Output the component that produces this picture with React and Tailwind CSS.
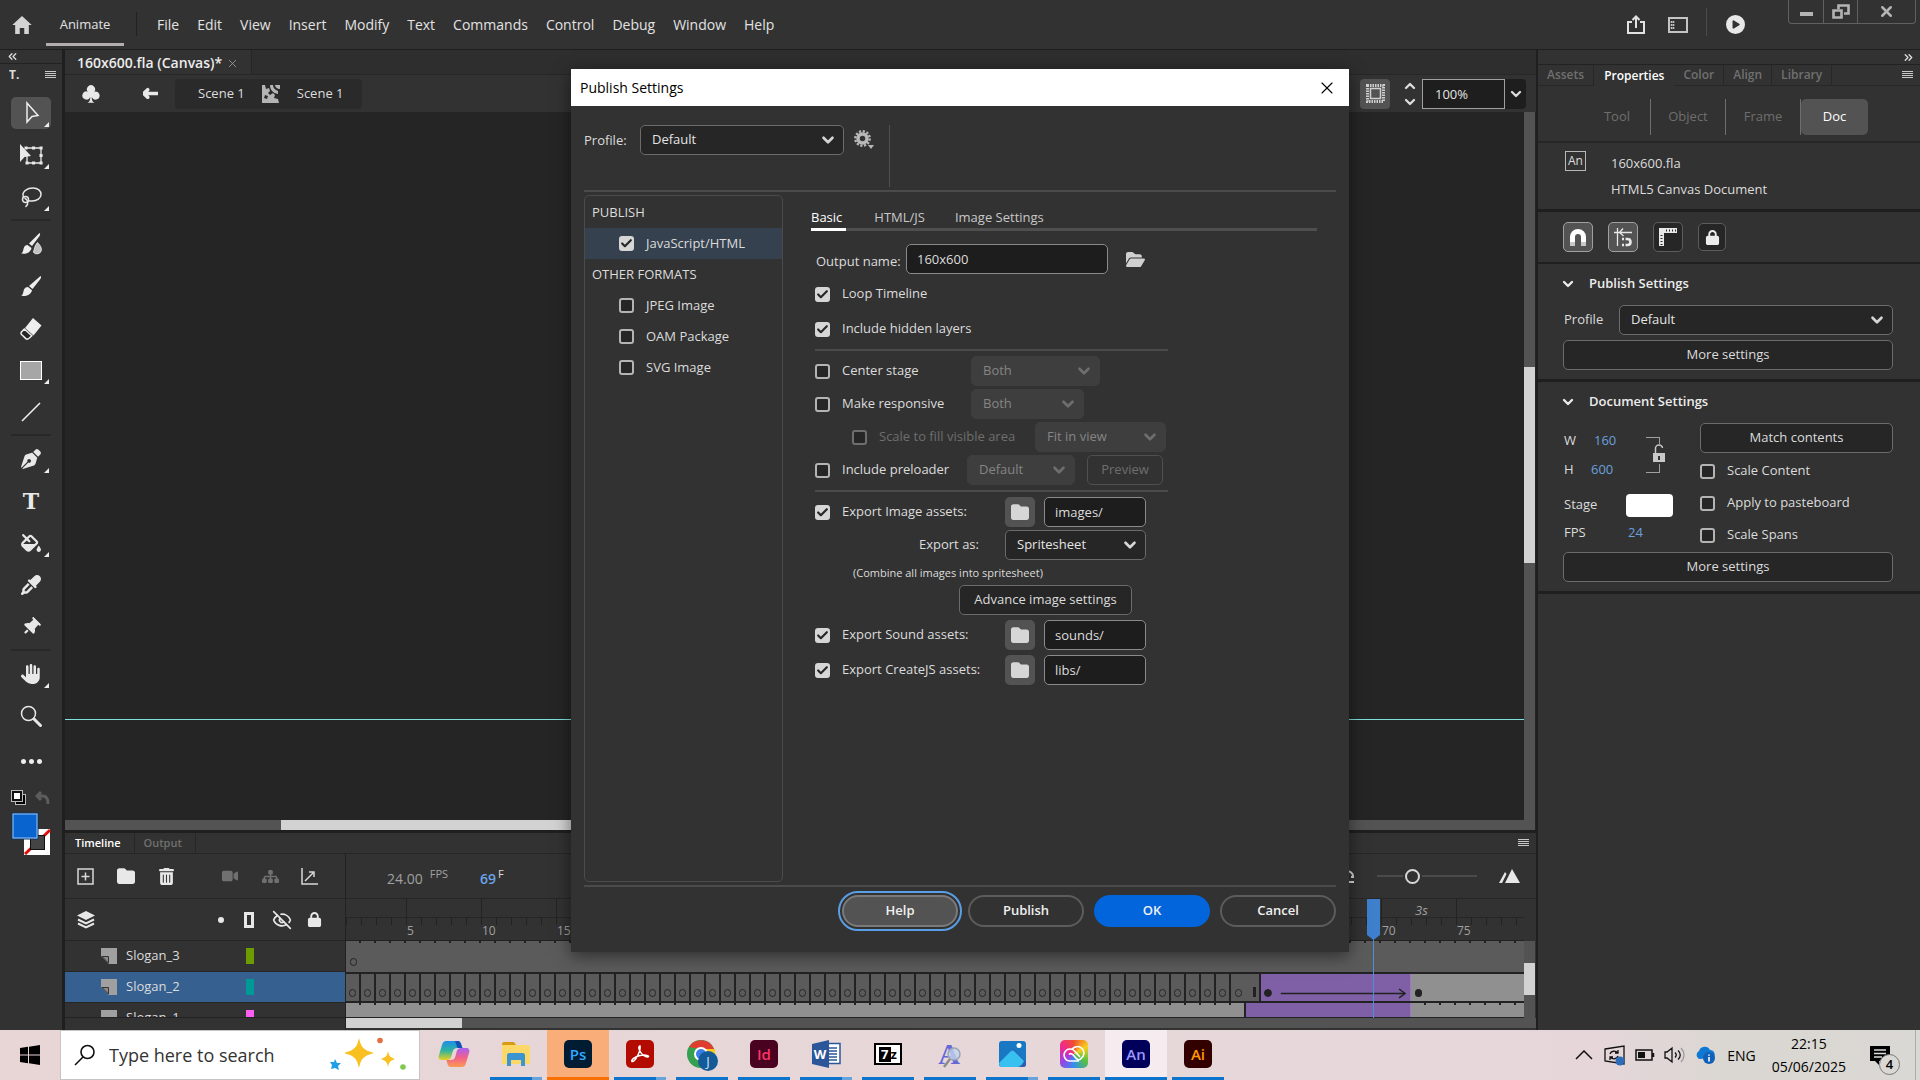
import { ChevronDown, ChevronUp, X, Share, EyeOff, Check, ChevronsLeft, ChevronsRight } from "lucide-react";
import {
  FaHand,
  FaThumbtack,
  FaPenNib,
  FaEyeDropper,
  FaFillDrip,
  FaLock,
  FaLockOpen,
  FaTrashCan,
  FaFolder,
  FaFolderOpen,
  FaVideo,
  FaSitemap,
  FaArrowLeftLong,
  FaCirclePlay,
} from "react-icons/fa6";
import { IoMdHome } from "react-icons/io";
import { GiClubs } from "react-icons/gi";

const MENUS = ["File", "Edit", "View", "Insert", "Modify", "Text", "Commands", "Control", "Debug", "Window", "Help"];

/* ---------- shared controls ---------- */

function Tick({ label, checked = false, disabled = false }) {
  return (
    <label className={`flex items-center gap-3 whitespace-nowrap ${disabled ? "text-[#6e6e6e]" : ""}`}>
      <span className="relative flex size-[15px] shrink-0">
        <input
          type="checkbox"
          defaultChecked={checked}
          disabled={disabled}
          className="peer size-[15px] appearance-none rounded-[3px] border-2 border-[#b4b4b4] bg-[#262626] checked:border-[#d6d6d6] checked:bg-[#d6d6d6] disabled:border-[#6e6e6e]"
        />
        <Check
          size={13}
          strokeWidth={4}
          className="pointer-events-none absolute left-px top-px hidden text-[#262626] peer-checked:block"
        />
      </span>
      {label}
    </label>
  );
}

function Select({ label, value, className = "", disabled = false }) {
  return (
    <span className={`relative flex h-[30px] ${className}`}>
      <select
        aria-label={label}
        disabled={disabled}
        className="w-full appearance-none rounded-[5px] border border-[#6b6b6b] bg-[#262626] pl-[11px] text-[13px] text-[#e4e4e4] disabled:border-[#3e3e3e] disabled:bg-[#3e3e3e] disabled:text-[#858585] disabled:opacity-100"
      >
        <option>{value}</option>
      </select>
      <ChevronDown
        size={18}
        strokeWidth={3.5}
        className={`pointer-events-none absolute right-[7px] top-[6px] ${disabled ? "text-[#6e6e6e]" : "text-[#d6d6d6]"}`}
      />
    </span>
  );
}

function BoxButton({ children, className = "" }) {
  return (
    <button className={`h-[30px] rounded-[5px] border border-[#6b6b6b] bg-[#262626] text-[13px] ${className}`}>
      {children}
    </button>
  );
}

function Lines() {
  return (
    <svg width="11" height="8" viewBox="0 0 11 8" fill="#c8c8c8">
      <path d="M0 0h11v1H0zM0 2h11v1H0zM0 4h11v1H0zM0 6h11v1H0z" />
    </svg>
  );
}

/* ---------- top bar ---------- */

function TopBar() {
  return (
    <header className="flex h-[49px] shrink-0 text-[14px] text-[#e2e2e2]">
      <button aria-label="Home" className="ml-[10px] flex w-[24px] items-center text-[#d4d4d4]">
        <IoMdHome size={24} />
      </button>
      <button className="relative ml-3 flex w-[78px] items-center justify-center text-[13px]">
        Animate
        <span className="absolute inset-x-0 bottom-[3px] h-[3px] bg-[#b5aeb0]" />
      </button>
      <span className="ml-3 mt-3 h-6 w-px bg-[#222]" />
      <nav className="ml-5 flex items-center gap-[18px]">
        {MENUS.map((m) => (
          <button key={m}>{m}</button>
        ))}
      </nav>
      <div className="ml-auto flex items-center">
        <button aria-label="Share" className="flex w-[42px] justify-center">
          <svg width="20" height="20" viewBox="0 0 20 20" fill="none" stroke="#e2e2e2" strokeWidth="2">
            <path d="M6 7H2v11h16V7h-4M10 13V2M6.500 5L10 1.500 13.500 5" />
          </svg>
        </button>
        <button aria-label="Workspaces" className="flex w-[42px] justify-center">
          <svg width="20" height="16" viewBox="0 0 20 16" fill="none" stroke="#c4c4c4">
            <rect x="1" y="1" width="18" height="14" strokeWidth="2" />
            <path d="M3.500 4v9M5.500 4v9" strokeWidth="1.600" strokeDasharray="2 1" />
          </svg>
        </button>
        <span className="ml-[7px] mt-2 h-7 w-px self-start bg-[#4b4b4b]" />
        <button aria-label="Test movie" className="ml-[19px] text-[#e8e8e8]">
          <FaCirclePlay size={19} />
        </button>
      </div>
      <div className="ml-[43px] mr-1 flex h-6 rounded-b-[4px] border border-t-0 border-[#606060] text-[#b4b4b4]">
        <button aria-label="Minimize" className="flex w-[35px] items-center justify-center border-r border-[#606060]">
          <span className="mt-1 h-1 w-[13px] bg-[#b4b4b4]" />
        </button>
        <button aria-label="Restore" className="flex w-[34px] items-center justify-center border-r border-[#606060]">
          <svg width="18" height="15" viewBox="0 0 18 15" fill="none" stroke="#b4b4b4" strokeWidth="2.600">
            <path d="M1.500 6.500h8v7h-8zM6.500 5V1.500h10v8H12" />
          </svg>
        </button>
        <button aria-label="Close" className="flex w-[57px] items-center justify-center">
          <X size={17} strokeWidth={3.5} />
        </button>
      </div>
    </header>
  );
}

/* ---------- tools ---------- */

const Cursor = (
  <svg width="24" height="24" viewBox="0 0 24 24" fill="none" stroke="#eee" strokeWidth="1.500">
    <path d="M8 2v19l5-5.500 6-1z" />
  </svg>
);
const FreeTransform = (
  <svg width="26" height="24" viewBox="0 0 26 24" fill="none" stroke="#e8e8e8">
    <path d="M8 5h15v15H9V12" strokeWidth="1.300" />
    <path d="M2 1v18l4.500-5 6.500-1z" fill="#e8e8e8" stroke="none" />
    <path d="M8 5h.1M15.500 5h.1M23 5h.1M23 12.500h.1M23 20h.1M15.500 20h.1M9 20h.1" strokeWidth="3" strokeLinecap="square" />
  </svg>
);
const Lasso = (
  <svg width="24" height="24" viewBox="0 0 24 24" fill="none" stroke="#e8e8e8" strokeWidth="1.500">
    <path d="M4.500 12.500C2 6 9 3 14 3c5 0 8 3 8 6.500S18 16 13 16c-1.500 0-2.500 0-3.500-.3" />
    <circle cx="6.500" cy="14.500" r="3" />
    <path d="M5.500 13c4 2 4.500 6 1 9" />
  </svg>
);
const Brush = (
  <svg width="24" height="24" viewBox="0 0 24 24" fill="#eee">
    <path d="M21.500 2c1 .6.5 2-.5 3.500L13.500 15 10 12z" />
    <path d="M9 13l4 3.200c-1 4.800-6 6.300-11 5.600 2-1 2-2.600 2.600-5C5.300 14 7 13 9 13z" />
  </svg>
);
const FluidBrush = (
  <svg width="24" height="24" viewBox="0 0 24 24" fill="#eee">
    <path d="M20.500 1c1.200.6.5 2-.3 3.500L13 14l-3-2.600z" />
    <path d="M8.500 13l4 3c-1 4.800-5.500 6.300-10.500 5.600 2-1 2-2.600 2.600-5C5.300 14 6.500 13 8.500 13z" />
    <path d="M18.500 10.500c2.500 2.500 4 5 4 7.300a4.600 4.600 0 0 1-8.300 2.200c1.600-2.500.8-5.500 4.300-9.500z" fill="#c0c0c0" stroke="#eee" strokeWidth=".8" />
  </svg>
);
const Eraser = (
  <svg width="24" height="24" viewBox="0 0 24 24" fill="#eee">
    <path d="M14 2l8.500 7.500-8 10L6 12z" />
    <path d="M5.300 13l7.500 6.800-3 2.700c-1 .8-2.300.7-3.200-.1l-4-3.800c-.8-.9-.8-1.600-.1-2.600z" fill="#262626" stroke="#eee" strokeWidth="1.500" />
  </svg>
);
const Line = (
  <svg width="20" height="20" viewBox="0 0 20 20" stroke="#eee" strokeWidth="1.600">
    <path d="M1 19L19 1" />
  </svg>
);
const Magnifier = (
  <svg width="24" height="24" viewBox="0 0 24 24" fill="none" stroke="#e8e8e8">
    <circle cx="9.500" cy="9.500" r="7" strokeWidth="1.500" />
    <path d="M15 15l6.500 6.500" strokeWidth="3" strokeLinecap="round" />
  </svg>
);

const TOOLS = [
  { name: "Selection", icon: Cursor, more: true, active: true },
  { name: "Free Transform", icon: FreeTransform, more: true },
  { name: "Lasso", icon: Lasso, more: true },
  null,
  { name: "Fluid Brush", icon: FluidBrush },
  { name: "Classic Brush", icon: Brush },
  { name: "Eraser", icon: Eraser },
  { name: "Rectangle", icon: <span className="h-[19px] w-[22px] border border-white bg-[#a6a6a6]" />, more: true },
  { name: "Line", icon: Line },
  null,
  { name: "Pen", icon: <FaPenNib size={20} />, more: true },
  { name: "Text", icon: <span className="font-['DejaVu_Serif',serif] text-[22px] font-bold leading-none">T</span> },
  { name: "Paint Bucket", icon: <FaFillDrip size={20} />, more: true },
  { name: "Eyedropper", icon: <FaEyeDropper size={20} /> },
  { name: "Asset Warp", icon: <FaThumbtack size={18} className="rotate-45" /> },
  null,
  { name: "Hand", icon: <FaHand size={20} />, more: true },
  { name: "Zoom", icon: Magnifier },
];

function Toolbar() {
  return (
    <aside className="flex w-[65px] shrink-0 flex-col border-r-[3px] border-t border-[#1f1f1f]">
      <div className="flex h-[14px] items-center border-b border-[#222] pl-[6px]">
        <ChevronsLeft size={13} strokeWidth={2.5} />
      </div>
      <div className="flex h-[21px] items-center justify-between pl-[9px] pr-[6px] text-[12px] font-bold">
        T.
        <Lines />
      </div>
      <div className="flex flex-col items-center pt-[7px] text-[#e8e8e8]">
        {TOOLS.map((t, i) =>
          t ? (
            <span key={t.name} className="flex h-[42px] items-center">
              <button
                aria-label={t.name}
                className={`relative flex h-8 w-10 items-center justify-center rounded-[5px] ${t.active ? "bg-[#535353]" : ""}`}
              >
                {t.icon}
                {t.more && (
                  <svg width="5" height="5" className="absolute bottom-[2px] right-[2px]" fill="#eee">
                    <path d="M5 0v5H0z" />
                  </svg>
                )}
              </button>
            </span>
          ) : (
            <span key={i} className="mb-[2px] mt-px h-[2px] w-10 bg-[#282828]" />
          ),
        )}
        <button aria-label="Edit toolbar" className="flex h-[48px] items-center gap-[3px]">
          <span className="size-[5px] rounded-full bg-[#eee]" />
          <span className="size-[5px] rounded-full bg-[#eee]" />
          <span className="size-[5px] rounded-full bg-[#eee]" />
        </button>
      </div>
      <svg width="52" height="66" viewBox="0 0 52 66" className="mt-1" fill="none">
        <rect x="15.500" y="5.500" width="10" height="10" fill="#000" stroke="#bbb" />
        <rect x="11.500" y="1.500" width="11" height="11" fill="#111" stroke="#bbb" />
        <rect x="14" y="4" width="6" height="6" fill="#fff" />
        <path d="M38 7h5c3 0 5 2 5 8M41 3l-4 4 4 4" stroke="#5c5c5c" strokeWidth="3" />
        <rect x="24" y="40" width="26" height="26" fill="#fff" />
        <path d="M25 65L50 41" stroke="#e01010" strokeWidth="3" />
        <rect x="30.500" y="46.500" width="14" height="14" fill="#444" stroke="#111" />
        <rect x="12" y="24" width="26" height="26" fill="#0a64d0" stroke="#10305a" />
        <rect x="13" y="25" width="24" height="24" stroke="#9cc4f0" />
      </svg>
    </aside>
  );
}

/* ---------- document ---------- */

function EditBar() {
  return (
    <div className="flex h-[38px] shrink-0 items-center border-t border-[#272727] text-[13px]">
      <button aria-label="Scene" className="ml-4 w-[18px] text-[#e8e8e8]">
        <GiClubs size={20} />
      </button>
      <button aria-label="Back" className="ml-11 text-[#e8e8e8]">
        <FaArrowLeftLong size={15} strokeWidth={60} stroke="#e8e8e8" />
      </button>
      <div className="ml-[17px] flex h-[30px] items-center rounded-[4px] bg-[#2a2a2a] pl-[23px] pr-[18px]">
        <button>Scene 1</button>
        <svg width="18" height="18" viewBox="0 0 18 18" className="mx-[17px]" fill="#b4b4b4">
          <path d="M0 0h3l1 4 3-1 1 3-2 2 2 2 3-2 2 2-1 3 4 1 1 4H0z" />
          <path d="M8 0h3c0 3 2 5 5 6v3c-5-1-8-4-8-9zM13 0h5v4c-3 0-5-2-5-4z" />
          <path d="M3 10l3 1-1 3-3-1z" fill="#2a2a2a" />
        </svg>
        <button>Scene 1</button>
      </div>
      <button aria-label="Clip content" className="ml-auto flex size-[30px] items-center justify-center rounded-[4px] bg-[#535353]">
        <svg width="19" height="19" viewBox="0 0 19 19" fill="none" stroke="#d0d0d0">
          <rect x="1.500" y="1.500" width="16" height="16" strokeWidth="3" strokeDasharray="1.500 1" />
          <rect x="4.500" y="4.500" width="10" height="10" strokeWidth="1.500" />
        </svg>
      </button>
      <span className="ml-3 flex flex-col items-center text-[#dcdcdc]">
        <ChevronUp size={16} strokeWidth={3.5} />
        <ChevronDown size={16} strokeWidth={3.5} />
      </span>
      <input
        aria-label="Zoom"
        defaultValue="100%"
        className="ml-1 h-[30px] w-[83px] border border-[#a0a0a0] bg-[#1e1e1e] pl-3 text-[#e4e4e4]"
      />
      <button aria-label="Zoom presets" className="mr-[10px] flex h-[30px] w-[21px] items-center justify-center rounded-r-[4px] bg-[#1e1e1e]">
        <ChevronDown size={16} strokeWidth={3.5} />
      </button>
    </div>
  );
}

function Stage() {
  return (
    <div className="flex min-h-0 flex-1 bg-[#252525]">
      <div className="flex min-w-0 flex-1 flex-col">
        <div className="flex flex-1 flex-col justify-end pb-[100px]">
          <div className="h-px bg-[#7fe0dc]" />
        </div>
        <div className="flex h-[10px] bg-[#535353]">
          <span className="ml-[216px] w-[900px] bg-[#d2d2d2]" />
        </div>
      </div>
      <div className="mr-px w-[11px] bg-[#535353] pt-[255px]">
        <div className="h-[196px] bg-[#d2d2d2]" />
      </div>
    </div>
  );
}

/* ---------- timeline ---------- */

const FRAME = 15;
const LAYERS = [
  { name: "Slogan_3", color: "#6c9c00" },
  { name: "Slogan_2", color: "#009a96", selected: true },
  { name: "Slogan_1", color: "#ff5ef5" },
];

function LayerRow({ layer }) {
  return (
    <div className={`flex h-[31px] shrink-0 items-center border-b border-[#262626] pl-9 text-[13px] ${layer.selected ? "bg-[#35608f]" : ""}`}>
      <svg width="16" height="16" viewBox="0 0 16 16">
        <path d="M0 0h16v16H8L0 8z" fill="#a0a0a0" />
        <path d="M1 8.500h6.500V15z" fill="#8a8a8a" stroke="#333" />
      </svg>
      <button className="w-[129px] pl-[9px] text-left">{layer.name}</button>
      <span className="h-4 w-2" style={{ background: layer.color }} />
    </div>
  );
}

function TimelineTools() {
  return (
    <div className="flex h-[45px] shrink-0 items-center border-b border-[#262626] text-[#e8e8e8]">
      <button aria-label="New layer" className="ml-3 flex w-[17px]">
        <svg width="17" height="17" viewBox="0 0 17 17" fill="none" stroke="#d8d8d8" strokeWidth="1.500">
          <path d="M1 1h15v15H1zM8.500 4.500v8M4.500 8.500h8" />
        </svg>
      </button>
      <button aria-label="New folder" className="ml-[23px]"><FaFolder size={18} /></button>
      <button aria-label="Delete" className="ml-[23px]"><FaTrashCan size={17} /></button>
      <button aria-label="Camera" className="ml-[47px] text-[#707070]"><FaVideo size={16} /></button>
      <button aria-label="Layer parenting" className="ml-6 text-[#707070]"><FaSitemap size={17} /></button>
      <button aria-label="Graph" className="ml-[22px]">
        <svg width="18" height="18" viewBox="0 0 18 18" fill="none" stroke="#d8d8d8" strokeWidth="1.500">
          <path d="M1 1v16h16M4 14l8-8M8 5h5v5" />
        </svg>
      </button>
    </div>
  );
}

function Ruler() {
  return (
    <div className="flex h-[42px] shrink-0 overflow-hidden border-b border-[#222] text-[12px] text-[#a0a0a0]">
      {Array.from({ length: 79 }, (_, i) => {
        const n = i + 1;
        const major = n % 5 === 0;
        return (
          <div key={n} className="flex w-[15px] shrink-0 flex-col">
            <div className={`h-[19px] border-b border-[#262626] ${major ? "border-l border-l-[#232323]" : ""}`}>
              {n === 72 && <span className="block pl-1 text-[13px] leading-[22px] italic">3s</span>}
            </div>
            <div className="h-[7px] border-l border-[#232323]" />
            {major && <span className="pl-px leading-[12px]">{n}</span>}
          </div>
        );
      })}
    </div>
  );
}

function Ticks() {
  return <div className="h-[2px] bg-[repeating-linear-gradient(90deg,transparent_0_13px,#222_13px_15px)]" />;
}

function Frames() {
  return (
    <div className="relative flex min-w-0 flex-1 flex-col overflow-hidden">
      <Ruler />
      <div className="h-[31px] shrink-0 bg-[#5b5b5b]">
        <Ticks />
        <span className="ml-[4px] mt-[15px] block h-2 w-[7px] rounded-full border border-[#222]" />
      </div>
      <div className="flex h-[31px] shrink-0 border-y-2 border-[#222] bg-[#909090]">
        {Array.from({ length: 60 }, (_, i) => (
          <span
            key={i}
            className={`flex w-[15px] shrink-0 items-end justify-center bg-[#5b5b5b] pb-1 ${i < 59 ? "border-r-2 border-[#222]" : ""}`}
          >
            <i className="h-2 w-[7px] rounded-full border border-[#262626]" />
          </span>
        ))}
        <span className="flex w-[15px] shrink-0 items-end justify-end border-r-2 border-[#222] bg-[#5b5b5b] pb-1 pr-[3px]">
          <i className="h-[10px] w-[3px] bg-[#222]" />
        </span>
        <span className="flex w-[150px] shrink-0 items-end border-r border-[#9b77cc] bg-[#7f5fa5]">
          <svg width="150" height="18" viewBox="0 0 150 18" fill="none" stroke="#222">
            <circle cx="7" cy="10" r="3.500" fill="#222" />
            <path d="M20 10.500h125" strokeWidth="1.500" />
            <path d="M139 6l6 4.500-6 4.500" strokeWidth="1.500" />
          </svg>
        </span>
        <span className="mb-1 ml-1 h-2 w-[7px] self-end rounded-full bg-[#222]" />
      </div>
      <div className="flex min-h-0 flex-1 border-b border-[#222]">
        <div className="w-[900px] border-r-2 border-[#222] bg-[#909090]"><Ticks /></div>
        <div className="w-[165px] border-r border-[#9b77cc] bg-[#7f5fa5]" />
        <div className="flex-1 bg-[#909090]"><Ticks /></div>
      </div>
      {/* playhead */}
      <div className="absolute inset-y-0 flex w-[15px] flex-col items-center" style={{ left: 68 * FRAME }}>
        <svg width="13" height="41" viewBox="0 0 13 41" fill="#3f80cc" className="shrink-0">
          <path d="M0 0h13v36l-6.500 5L0 36z" />
        </svg>
        <span className="w-px flex-1 bg-[#4a90dc]" />
      </div>
    </div>
  );
}

function Timeline() {
  return (
    <section className="flex h-[200px] shrink-0 flex-col border-t-[3px] border-[#1f1f1f]">
      <div className="flex h-[21px] items-stretch border-b border-[#262626] text-[11px] font-semibold">
        <button className="pl-[10px] pr-[13px] text-white">Timeline</button>
        <button className="border-x border-[#262626] pl-[9px] pr-[13px] text-[#707070]">Output</button>
        <span className="ml-auto mr-[7px] flex items-center"><Lines /></span>
      </div>
      <div className="flex min-h-0 flex-1">
        <div className="flex w-[281px] shrink-0 flex-col border-r border-[#222]">
          <TimelineTools />
          <div className="flex h-[42px] shrink-0 items-center border-b border-[#262626] text-[#e8e8e8]">
            <svg width="18" height="18" viewBox="0 0 18 18" className="ml-3" fill="#e8e8e8">
              <path d="M9 0l9 4.500L9 9 0 4.500z" />
              <path d="M1 8.500l8 4 8-4M1 12.500l8 4 8-4" fill="none" stroke="#e8e8e8" strokeWidth="2" />
            </svg>
            <span className="ml-[123px] size-[6px] rounded-full bg-[#e8e8e8]" />
            <span className="ml-5 h-4 w-[10px] border-[3px] border-[#e8e8e8]" />
            <EyeOff size={20} className="ml-[18px]" />
            <FaLock size={15} className="ml-[15px]" />
          </div>
          <div className="mb-[12px] flex min-h-0 flex-1 flex-col overflow-hidden border-b border-[#222]">
            {LAYERS.map((l) => (
              <LayerRow key={l.name} layer={l} />
            ))}
          </div>
        </div>
        <div className="flex min-w-0 flex-1 flex-col">
          <div className="flex h-[45px] shrink-0 items-center border-b border-[#262626]">
            <span className="ml-[41px] pt-1 text-[14px] text-[#a0a0a0]">24.00</span>
            <span className="ml-[7px] pb-1 text-[11px] text-[#a0a0a0]">FPS</span>
            <span className="ml-8 pt-1 text-[14px] font-semibold text-[#6ba4e8]">69</span>
            <span className="ml-[2px] pb-1 text-[11px]">F</span>
            <svg width="18" height="16" viewBox="0 0 18 16" className="ml-auto" fill="none" stroke="#d8d8d8" strokeWidth="2">
              <path d="M2 9c0-8 15-8 14 0M14 9h3M9 14h8" />
            </svg>
            <label className="ml-[22px] flex w-[100px] items-center">
              <span className="h-[2px] w-[26px] bg-[#4b4b4b]" />
              <input
                type="range"
                aria-label="Timeline zoom"
                className="mx-[2px] size-[15px] appearance-none rounded-full border-2 border-[#d8d8d8] [&::-webkit-slider-thumb]:appearance-none"
              />
              <span className="h-[2px] flex-1 bg-[#4b4b4b]" />
            </label>
            <svg width="21" height="14" viewBox="0 0 21 14" className="ml-[22px] mr-4" fill="#e8e8e8">
              <path d="M13 0l8 14H6zM6 3l1.500 2L3 14H0z" />
            </svg>
          </div>
          <div className="flex min-h-0 flex-1">
            <Frames />
            <div className="mr-px mt-[42px] w-[11px] bg-[#535353] pt-[22px]">
              <div className="h-[32px] bg-[#d2d2d2]" />
            </div>
          </div>
          <div className="mb-[2px] flex h-[10px] shrink-0 bg-[#535353]">
            <span className="w-[116px] bg-[#d2d2d2]" />
          </div>
        </div>
      </div>
    </section>
  );
}

/* ---------- properties panel ---------- */

function Section({ title, children }) {
  return (
    <section className="border-b-[3px] border-[#1f1f1f] pb-[9px] pl-[25px] pr-[27px]">
      <h2 className="flex h-[41px] items-center pb-[2px] text-[13px] font-semibold text-[#ececec]">
        <ChevronDown size={16} strokeWidth={3.5} className="-ml-[3px] mr-[13px]" />
        {title}
      </h2>
      {children}
    </section>
  );
}

const PANEL_TABS = ["Assets", "Properties", "Color", "Align", "Library"];

function Properties() {
  return (
    <aside className="flex w-[384px] shrink-0 flex-col border-l-2 border-t border-[#1f1f1f] text-[13px]">
      <div className="flex h-[15px] items-center justify-end border-b border-[#222] pr-[5px]">
        <ChevronsRight size={13} strokeWidth={2.5} />
      </div>
      <div className="flex h-[21px] text-[12px] font-semibold text-[#707070]">
        {PANEL_TABS.map((t) => (
          <button
            key={t}
            className={t === "Properties" ? "px-[10px] text-white" : "border-b border-r border-[#272727] px-[9px]"}
          >
            {t}
          </button>
        ))}
        <span className="flex flex-1 items-center justify-end border-b border-[#272727] pr-[7px]"><Lines /></span>
      </div>
      <div className="flex h-[57px] items-center justify-end border-b-2 border-[#262626] pr-[52px] pt-[7px] text-[#6e6e6e]">
        <button className="h-9 border-r border-[#6e6e6e] px-[20px]">Tool</button>
        <button className="h-9 w-[75px] border-r border-[#6e6e6e]">Object</button>
        <button className="h-9 w-[75px] border-r border-[#6e6e6e]">Frame</button>
        <button className="h-9 w-[67px] rounded-[5px] bg-[#535353] text-white">Doc</button>
      </div>
      <div className="flex h-[69px] border-b-[3px] border-[#1f1f1f] pl-[27px] pt-[7px]">
        <span className="mt-px flex h-[20px] w-[21px] items-center justify-center border border-[#b8b8b8] text-[12px]">An</span>
        <div className="ml-[25px] leading-[26px]">
          <p>160x600.fla</p>
          <p>HTML5 Canvas Document</p>
        </div>
      </div>
      <div className="flex h-[52px] items-center gap-[15px] border-b-2 border-[#1f1f1f] pl-[25px] text-[#ececec]">
        <button aria-label="Snap to objects" className="flex size-[30px] items-center justify-center rounded-[5px] border border-[#a0a0a0] bg-[#535353]">
          <svg width="18" height="18" viewBox="0 0 18 18" fill="none" strokeWidth="5">
            <path d="M3.500 15V9a5.500 5.500 0 0 1 11 0v6" stroke="#fff" />
            <path d="M3.500 14v4M14.500 14v4" stroke="#c8c8c8" />
          </svg>
        </button>
        <button aria-label="Snap to guides" className="flex size-[30px] items-center justify-center rounded-[5px] border border-[#a0a0a0] bg-[#535353]">
          <svg width="20" height="20" viewBox="0 0 20 20" fill="none" stroke="#e8e8e8">
            <path d="M1 5.500h18M4.500 1v18M10 1.500L6.500 5.500l4 3.500" strokeWidth="1.300" />
            <path d="M9 12h2M9 18h2" strokeWidth="2.600" />
            <path d="M12.500 12h2c4 0 4 6 0 6h-2" strokeWidth="2.600" />
          </svg>
        </button>
        <button aria-label="Rulers" className="flex size-[30px] items-center justify-center rounded-[5px] border border-[#5c5c5c] bg-[#262626]">
          <svg width="20" height="20" viewBox="0 0 20 20">
            <path d="M1 1h18v5H6v13H1z" fill="#e8e8e8" />
            <path d="M8 3.500h10M3.500 8v11" stroke="#262626" strokeWidth="2" strokeDasharray="1 2" />
          </svg>
        </button>
        <button aria-label="Lock guides" className="flex size-[28px] items-center justify-center rounded-[5px] border border-[#5c5c5c] bg-[#262626]">
          <FaLock size={15} />
        </button>
      </div>
      <Section title="Publish Settings">
        <div className="mb-[5px] flex items-center">
          <span className="w-[56px] pl-px">Profile</span>
          <Select label="Profile" value="Default" className="flex-1" />
        </div>
        <BoxButton className="w-full">More settings</BoxButton>
      </Section>
      <Section title="Document Settings">
        <div className="flex">
          <div className="w-[137px] pl-px">
            <div className="flex pt-[3px]">
              <div>
                <p className="flex h-[29px] items-center"><span className="w-[30px]">W</span><b className="font-normal text-[#6ba0dc]">160</b></p>
                <p className="flex h-[29px] items-center"><span className="w-[27px]">H</span><b className="font-normal text-[#6ba0dc]">600</b></p>
              </div>
              <div className="relative ml-[30px] mt-[11px] h-9 w-[14px] border-y border-r border-[#a0a0a0] text-[#c8c8c8]">
                <svg width="14" height="20" viewBox="0 0 14 20" className="absolute -right-[7px] top-[6px] bg-[#323232]">
                  <path d="M3.500 9V5a3.500 3.500 0 0 1 7-1" fill="none" stroke="#c8c8c8" strokeWidth="1.500" />
                  <path d="M1 9h12v9H1z" fill="#c8c8c8" />
                  <path d="M7 12v4" stroke="#323232" strokeWidth="2" />
                </svg>
              </div>
            </div>
            <p className="mt-[6px] flex h-[30px] items-center">
              <span className="w-[62px]">Stage</span>
              <button aria-label="Stage color" className="h-[23px] w-[47px] rounded-[4px] bg-white" />
            </p>
            <p className="flex h-[26px] items-center"><span className="w-[64px]">FPS</span><b className="font-normal text-[#6ba0dc]">24</b></p>
          </div>
          <div className="flex-1">
            <BoxButton className="w-full">Match contents</BoxButton>
            <div className="mt-[2px] flex flex-col *:h-8">
              <Tick label="Scale Content" />
              <Tick label="Apply to pasteboard" />
              <Tick label="Scale Spans" />
            </div>
          </div>
        </div>
        <BoxButton className="mt-px w-full">More settings</BoxButton>
      </Section>
    </aside>
  );
}

/* ---------- publish dialog ---------- */

function AssetRow({ label, path }) {
  return (
    <div className="flex h-[30px] items-center">
      <div className="w-[190px]"><Tick label={label} checked /></div>
      <button aria-label={`Browse for ${path}`} className="flex size-[30px] items-center justify-center rounded-[5px] bg-[#535353] text-[#d6d6d6]">
        <FaFolder size={18} />
      </button>
      <input
        aria-label={label}
        defaultValue={path}
        className="ml-[9px] h-[30px] w-[102px] rounded-[5px] border border-[#8a8a8a] bg-[#1d1d1d] pl-[10px] text-[13px]"
      />
    </div>
  );
}

function PublishForm() {
  return (
    <div className="flex flex-1 flex-col pl-[28px] pr-[19px] pt-3">
      <div className="flex h-[24px] gap-[28px] border-b-[3px] border-[#4f4f4f] text-[#c8c8c8]">
        <button className="-mb-[3px] border-b-[3px] border-white pr-1 text-white">Basic</button>
        <button>HTML/JS</button>
        <button className="ml-[2px]">Image Settings</button>
      </div>
      <div className="flex w-[357px] flex-col pl-1 pt-[13px]">
        <div className="flex h-[30px] items-center">
          <label htmlFor="out" className="w-[91px] whitespace-nowrap pl-px pt-[6px]">Output name:</label>
          <input id="out" defaultValue="160x600" className="h-[30px] w-[202px] rounded-[5px] border border-[#8a8a8a] bg-[#1d1d1d] pl-[10px]" />
          <button aria-label="Browse" className="ml-[18px] text-[#d0d0d0]"><FaFolderOpen size={19} /></button>
        </div>
        <div className="mt-[5px] flex h-[30px] items-center"><Tick label="Loop Timeline" checked /></div>
        <div className="mt-[5px] flex h-[30px] items-center"><Tick label="Include hidden layers" checked /></div>
        <div className="mt-[5px] h-[2px] bg-[#4b4b4b]" />
        <div className="my-[5px] flex flex-col gap-[3px] *:flex *:h-[30px] *:items-center">
          <div>
            <div className="w-[156px]"><Tick label="Center stage" /></div>
            <Select label="Center stage alignment" value="Both" disabled className="w-[129px]" />
          </div>
          <div>
            <div className="w-[156px]"><Tick label="Make responsive" /></div>
            <Select label="Responsive direction" value="Both" disabled className="w-[113px]" />
          </div>
          <div className="pl-[37px]">
            <div className="w-[183px]"><Tick label="Scale to fill visible area" disabled /></div>
            <Select label="Scale mode" value="Fit in view" disabled className="w-[131px]" />
          </div>
          <div>
            <div className="w-[152px]"><Tick label="Include preloader" /></div>
            <Select label="Preloader" value="Default" disabled className="w-[108px]" />
            <button disabled className="ml-3 h-[30px] w-[76px] rounded-[5px] border border-[#4f4f4f] text-[#6e6e6e]">Preview</button>
          </div>
        </div>
        <div className="h-[2px] bg-[#4b4b4b]" />
        <div className="mt-[5px] flex flex-col gap-[3px]">
          <AssetRow label="Export Image assets:" path="images/" />
          <div className="flex h-[30px] items-center">
            <span className="w-[190px] pl-[104px]">Export as:</span>
            <Select label="Export as" value="Spritesheet" className="w-[141px]" />
          </div>
          <p className="h-[19px] pl-[38px] text-[11px] leading-[20px]">(Combine all images into spritesheet)</p>
          <BoxButton className="ml-[144px] w-[173px]">Advance image settings</BoxButton>
        </div>
        <div className="mt-[5px] flex flex-col gap-[5px]">
          <AssetRow label="Export Sound assets:" path="sounds/" />
          <AssetRow label="Export CreateJS assets:" path="libs/" />
        </div>
      </div>
    </div>
  );
}

function PublishDialog() {
  const pill = "h-8 w-[116px] rounded-full border-2";
  return (
    <div className="absolute inset-x-0 top-[69px] flex justify-center">
      <div role="dialog" aria-label="Publish Settings" className="flex h-[883px] w-[778px] flex-col bg-[#323232] text-[13px] shadow-[0_4px_16px_rgba(0,0,0,0.5)]">
        <div className="flex h-[37px] shrink-0 items-center justify-between bg-white pl-[9px] pr-[12px] text-[14px] text-black">
          Publish Settings
          <button aria-label="Close dialog"><X size={20} strokeWidth={1.3} /></button>
        </div>
        <div className="mx-[13px] flex h-[86px] shrink-0 border-b-2 border-[#4b4b4b] pt-[19px]">
          <span className="w-[56px] leading-[30px]">Profile:</span>
          <Select label="Dialog profile" value="Default" className="w-[204px]" />
          <button aria-label="Profile options" className="ml-[10px] mt-[5px] h-[20px]">
            <svg width="21" height="20" viewBox="0 0 21 20">
              <circle cx="8.500" cy="8.500" r="4.500" fill="none" stroke="#b8b8b8" strokeWidth="3.500" />
              <circle cx="8.500" cy="8.500" r="7.200" fill="none" stroke="#b8b8b8" strokeWidth="2.400" strokeDasharray="2.200 1.570" />
              <path d="M14 15h6l-3 4z" fill="#b8b8b8" />
            </svg>
          </button>
          <span className="ml-[14px] h-[62px] w-px bg-[#505050]" />
        </div>
        <div className="mx-[13px] mt-[3px] flex flex-1">
          <div className="flex w-[199px] flex-col rounded-[5px] border border-[#4b4b4b] pt-px *:flex *:h-[31px] *:items-center">
            <p className="pl-[7px]">PUBLISH</p>
            <div className="bg-[#35414f] pl-[34px]"><Tick label="JavaScript/HTML" checked /></div>
            <p className="pl-[7px]">OTHER FORMATS</p>
            <div className="pl-[34px]"><Tick label="JPEG Image" /></div>
            <div className="pl-[34px]"><Tick label="OAM Package" /></div>
            <div className="pl-[34px]"><Tick label="SVG Image" /></div>
          </div>
          <PublishForm />
        </div>
        <div className="mx-[13px] mb-[25px] mt-[3px] flex shrink-0 justify-end gap-[10px] border-t-2 border-[#4b4b4b] pt-2 font-semibold text-[#f0f0f0]">
          <button className={`${pill} border-[#7a7a7a] bg-[#535353] outline-2 outline-offset-2 outline-[#5a9ee6]`}>Help</button>
          <button className={`${pill} border-[#5c5c5c]`}>Publish</button>
          <button className={`${pill} border-[#0265dc] bg-[#0265dc]`}>OK</button>
          <button className={`${pill} border-[#5c5c5c]`}>Cancel</button>
        </div>
      </div>
    </div>
  );
}

/* ---------- taskbar ---------- */

function Tile({ children, className = "" }) {
  return (
    <span className={`flex size-7 items-center justify-center rounded-[5px] text-[15px] font-semibold ${className}`}>{children}</span>
  );
}

const APPS = [
  {
    name: "Copilot",
    icon: (
      <svg width="32" height="30" viewBox="0 0 32 30">
        <defs>
          <linearGradient id="cp1" x1="0" y1="0" x2="0" y2="1">
            <stop offset="0" stopColor="#1a8fe8" />
            <stop offset=".5" stopColor="#2fb3a0" />
            <stop offset="1" stopColor="#e8d020" />
          </linearGradient>
          <linearGradient id="cp2" x1="0" y1="0" x2="0" y2="1">
            <stop offset="0" stopColor="#a860f0" />
            <stop offset=".5" stopColor="#f0608c" />
            <stop offset="1" stopColor="#fb9a50" />
          </linearGradient>
        </defs>
        <path d="M8 2h11c2 0 3 1 3.500 3l1 4h-4c-3 0-4 1-5 4l-1 4c-1 3-2 4-5 4H4c-3 0-4-2-3-5L4 6c1-3 2-4 4-4z" fill="url(#cp1)" />
        <path d="M24 28H13c-2 0-3-1-3.500-3l-1-4h4c3 0 4-1 5-4l1-4c1-3 2-4 5-4H28c3 0 4 2 3 5l-3 10c-1 3-2 4-4 4z" fill="url(#cp2)" />
        <path d="M17 2h3c2 0 3 2 3.500 4l1 3h-5z" fill="#1450b8" />
      </svg>
    ),
  },
  {
    name: "File Explorer",
    bar: "split",
    icon: (
      <svg width="28" height="26" viewBox="0 0 28 26">
        <path d="M0 3c0-1 1-2 2-2h10l2 3H0z" fill="#d89c10" />
        <path d="M0 4h26c1 0 2 1 2 2v17H0z" fill="#fbd868" />
        <path d="M5 25V14c0-1 1-2 2-2h14c1 0 2 1 2 2v11h-4v-6H9v6z" fill="#3c94d0" />
      </svg>
    ),
  },
  { name: "Photoshop", bg: "bg-[#f9ae79]", bar: "orange", icon: <Tile className="bg-[#001c33] text-[#31a8ff]">Ps</Tile> },
  {
    name: "Acrobat",
    bar: "split",
    icon: (
      <Tile className="bg-[#b30b00]">
        <svg width="20" height="18" viewBox="0 0 20 18" fill="none" stroke="#fff" strokeWidth="1.500">
          <path d="M10 1c-3 0 0 9 7 11 4 0 0-3-7-1.500S1 16 2 16.500C5 17 11 6 10 1z" />
        </svg>
      </Tile>
    ),
  },
  {
    name: "Chrome",
    bar: "full",
    icon: (
      <svg width="32" height="34" viewBox="0 0 32 34">
        <circle cx="15" cy="17" r="14" fill="#34a050" />
        <path d="M3 10a14 14 0 0 1 25 2H15z" fill="#e03c30" />
        <path d="M28.500 12A14 14 0 0 1 15 31l6-11-3-8z" fill="#fbc820" />
        <circle cx="15" cy="17" r="7" fill="#fff" />
        <circle cx="15" cy="17" r="5" fill="#3a7ce8" />
        <circle cx="22" cy="24" r="10" fill="#155a98" />
        <text x="22" y="29" fill="#d0e4f4" fontSize="13" textAnchor="middle">J</text>
      </svg>
    ),
  },
  { name: "InDesign", bar: "full", icon: <Tile className="bg-[#49021f] text-[#ff3366]">Id</Tile> },
  {
    name: "Word",
    bar: "split",
    icon: (
      <svg width="29" height="28" viewBox="0 0 29 28">
        <path d="M14 3.500h14v20H14z" fill="#fff" stroke="#2b579a" strokeWidth="1.500" />
        <path d="M16 8h9M16 11h9M16 14h9M16 17h9M16 20h9" stroke="#2b579a" strokeWidth="1.300" />
        <path d="M0 4l17-4v28L0 24z" fill="#2b579a" />
        <text x="8" y="19" fill="#fff" fontSize="13" fontWeight="700" textAnchor="middle">W</text>
      </svg>
    ),
  },
  {
    name: "7-Zip",
    bar: "full",
    icon: (
      <span className="flex h-[22px] w-7 items-center justify-center border-2 border-black bg-white text-[13px] font-bold leading-none text-black">
        <i className="bg-black px-[2px] py-px not-italic text-white">7</i>z
      </span>
    ),
  },
  {
    name: "Font Viewer",
    bar: "full",
    icon: (
      <svg width="30" height="34" viewBox="0 0 30 34">
        <text x="14" y="27" fill="#6468d8" fontSize="30" fontWeight="700" fontFamily="Liberation Serif, serif" textAnchor="middle">A</text>
        <circle cx="19" cy="17" r="6" fill="#c4d4ec" fillOpacity=".8" stroke="#9aa4b4" strokeWidth="1.500" />
        <path d="M15 22l-6 8" stroke="#8c8c90" strokeWidth="2.500" />
      </svg>
    ),
  },
  {
    name: "Photos",
    bar: "split",
    icon: (
      <svg width="27" height="26" viewBox="0 0 27 26">
        <rect width="27" height="26" rx="3" fill="#1878c4" />
        <path d="M12 10c2-2 3-1 4 0l11 11v2c0 2-1 3-3 3H6z" fill="#2f5cb0" />
        <path d="M0 22l11-11c2-2 3-2 5 0l9 9c-2 4-4 6-8 6H3c-2 0-3-2-3-4z" fill="#38c0f0" />
        <circle cx="20" cy="4.500" r="2.500" fill="#fff" />
      </svg>
    ),
  },
  {
    name: "Creative Cloud",
    bar: "full",
    icon: (
      <Tile className="bg-[conic-gradient(#f0502c,#f8d020,#58c040,#3090f0,#a040e0,#f02890,#f0502c)]">
        <svg width="22" height="17" viewBox="0 0 22 17" fill="none" stroke="#fff" strokeWidth="1.600">
          <path d="M16 15H7a6 6 0 1 1 5-9.500L17 11M6 8.500c2-2 4 0 6 2.500s4 4 6 1.500a6.500 6.500 0 1 0-9-9" />
        </svg>
      </Tile>
    ),
  },
  { name: "Animate", bg: "bg-[#f4ecee]", bar: "wide", icon: <Tile className="bg-[#00005b] text-[#9999ff]">An</Tile> },
  { name: "Illustrator", bar: "full", icon: <Tile className="bg-[#330000] text-[#ff9a00]">Ai</Tile> },
];

function AppBar({ kind }) {
  if (!kind) return null;
  if (kind === "orange") return <span className="absolute inset-x-0 bottom-0 h-[3px] bg-[#f87000]" />;
  if (kind === "wide") return <span className="absolute inset-x-0 bottom-0 h-[3px] bg-[#0c74cc]" />;
  return (
    <span className="absolute inset-x-[5px] bottom-0 flex h-[3px] bg-[#0c74cc]">
      {kind === "split" && <i className="ml-auto w-[10px] bg-[#68a4dc]" />}
    </span>
  );
}

function Taskbar() {
  return (
    <footer className="flex h-[50px] shrink-0 items-stretch bg-[linear-gradient(90deg,#e8d5d6,#e6d7d9_60%,#e6d6da_83%,#dad7d2_90%,#dad8d4)] text-black">
      <button aria-label="Start" className="flex w-[60px] items-center justify-center">
        <svg width="20" height="20" viewBox="0 0 20 20">
          <path d="M0 3l8-1.200V9.500H0zM9 1.700L20 0v9.500H9zM0 10.500h8v7.700L0 17zM9 10.500h11V20L9 18.300z" />
        </svg>
      </button>
      <label className="flex w-[360px] items-center border border-[#c8c4c4] bg-white">
        <svg width="22" height="22" viewBox="0 0 22 22" className="ml-[13px]" fill="none" stroke="#111" strokeWidth="1.600">
          <circle cx="13.500" cy="8" r="6.500" />
          <path d="M9 13l-8 8" />
        </svg>
        <input
          aria-label="Search"
          placeholder="Type here to search"
          className="ml-[13px] w-[190px] text-[18px] placeholder:text-[#333] placeholder:opacity-100"
        />
        <svg width="78" height="36" viewBox="0 0 78 36" className="ml-[31px]">
          <path d="M29 1c2 9 4 12 15 15-11 3-13 6-15 15-2-9-4-12-15-15C25 13 27 10 29 1z" fill="#f8c020" />
          <path d="M58 14c1 5 2 6 7 8-5 2-6 3-7 8-1-5-2-6-7-8 5-2 6-3 7-8z" fill="#f8c020" />
          <path d="M5 22l2 4h4l-3 3 1 4-4-2-4 1 1-4-2-3h4z" fill="#20a0e8" />
          <circle cx="50" cy="3.500" r="2.800" fill="#e07040" />
          <circle cx="73" cy="30" r="2.800" fill="#80c850" />
        </svg>
      </label>
      <nav className="ml-[3px] flex">
        {APPS.map((a) => (
          <button key={a.name} aria-label={a.name} className={`relative flex w-[62px] items-center justify-center pb-[2px] ${a.bg ?? ""}`}>
            {a.icon}
            <AppBar kind={a.bar} />
          </button>
        ))}
      </nav>
      <div className="ml-auto flex items-center text-[14px]">
        <svg width="18" height="10" viewBox="0 0 18 10" fill="none" stroke="#111" strokeWidth="1.500"><path d="M1 9l8-8 8 8" /></svg>
        <svg width="21" height="21" viewBox="0 0 21 21" className="ml-[11px]" fill="none" stroke="#111" strokeWidth="1.300">
          <path d="M1 4l19-3v18L1 16z" />
          <path d="M6 9c1-3 5-4 8-1M14 5v3h-3M14 11c-1 3-5 4-8 1M6 15v-3h3" />
          <circle cx="16" cy="16" r="4.500" fill="#2c6cb8" stroke="none" />
        </svg>
        <svg width="20" height="12" viewBox="0 0 20 12" className="ml-[10px]" fill="none" stroke="#111" strokeWidth="1.500">
          <path d="M1 1h16v10H1zM18.500 4v4" />
          <path d="M3 3h7v6H3z" fill="#111" stroke="none" />
        </svg>
        <svg width="21" height="18" viewBox="0 0 21 18" className="ml-[9px]" fill="none" stroke="#111" strokeWidth="1.300">
          <path d="M1 6h2l5-4v14l-5-4H1zM11 6.500c1.500 1.500 1.500 3.500 0 5M14 4.500c3 2.500 3 6.500 0 9" />
          <path d="M17 2c4 4 4 10 0 14" stroke="#999" />
        </svg>
        <svg width="21" height="18" viewBox="0 0 21 18" className="ml-[9px]">
          <path d="M5 13a4.500 4.500 0 0 1 0-8 6 6 0 0 1 11-1 4.500 4.500 0 0 1 3 8z" fill="#0f78d0" />
          <circle cx="15" cy="12" r="6" fill="#1060b8" />
          <path d="M15 11v4.500M15 8.500v1.200" stroke="#fff" strokeWidth="1.600" />
        </svg>
        <span className="ml-3">ENG</span>
        <time className="ml-4 text-center leading-[23px]">22:15<br />05/06/2025</time>
        <span className="relative ml-6 flex h-[50px] w-[45px] items-center">
          <svg width="20" height="19" viewBox="0 0 20 19">
            <path d="M0 0h20v15H9v4l-4-4H0z" />
            <path d="M4 4h12M4 7.500h12M4 11h8" stroke="#ddd" strokeWidth="1.300" />
          </svg>
          <span className="absolute left-[9px] top-[24px] flex size-[21px] items-center justify-center rounded-full border border-[#777] bg-[#dad8d4] text-[13px] font-semibold">4</span>
        </span>
        <span className="mr-1 h-[50px] w-px bg-[#b0aeac]" />
      </div>
    </footer>
  );
}

export default function App() {
  return (
    <div className="relative flex h-screen flex-col overflow-hidden bg-[#323232] font-['Open_Sans','Noto_Sans',sans-serif] text-[#dcdcdc]">
      <TopBar />
      <main className="flex min-h-0 flex-1">
        <Toolbar />
        <div className="flex min-w-0 flex-1 flex-col">
          <div className="flex h-[25px] shrink-0 border-t border-[#1f1f1f] bg-[#2e2e2e]">
            <button className="flex items-center gap-1 border-r border-[#262626] bg-[#323232] px-3 text-[14px] font-semibold text-[#ececec]">
              160x600.fla (Canvas)*
              <X size={13} strokeWidth={1.5} className="mt-[2px] text-[#a0a0a0]" />
            </button>
          </div>
          <EditBar />
          <Stage />
          <Timeline />
        </div>
        <Properties />
      </main>
      <Taskbar />
      <PublishDialog />
    </div>
  );
}
